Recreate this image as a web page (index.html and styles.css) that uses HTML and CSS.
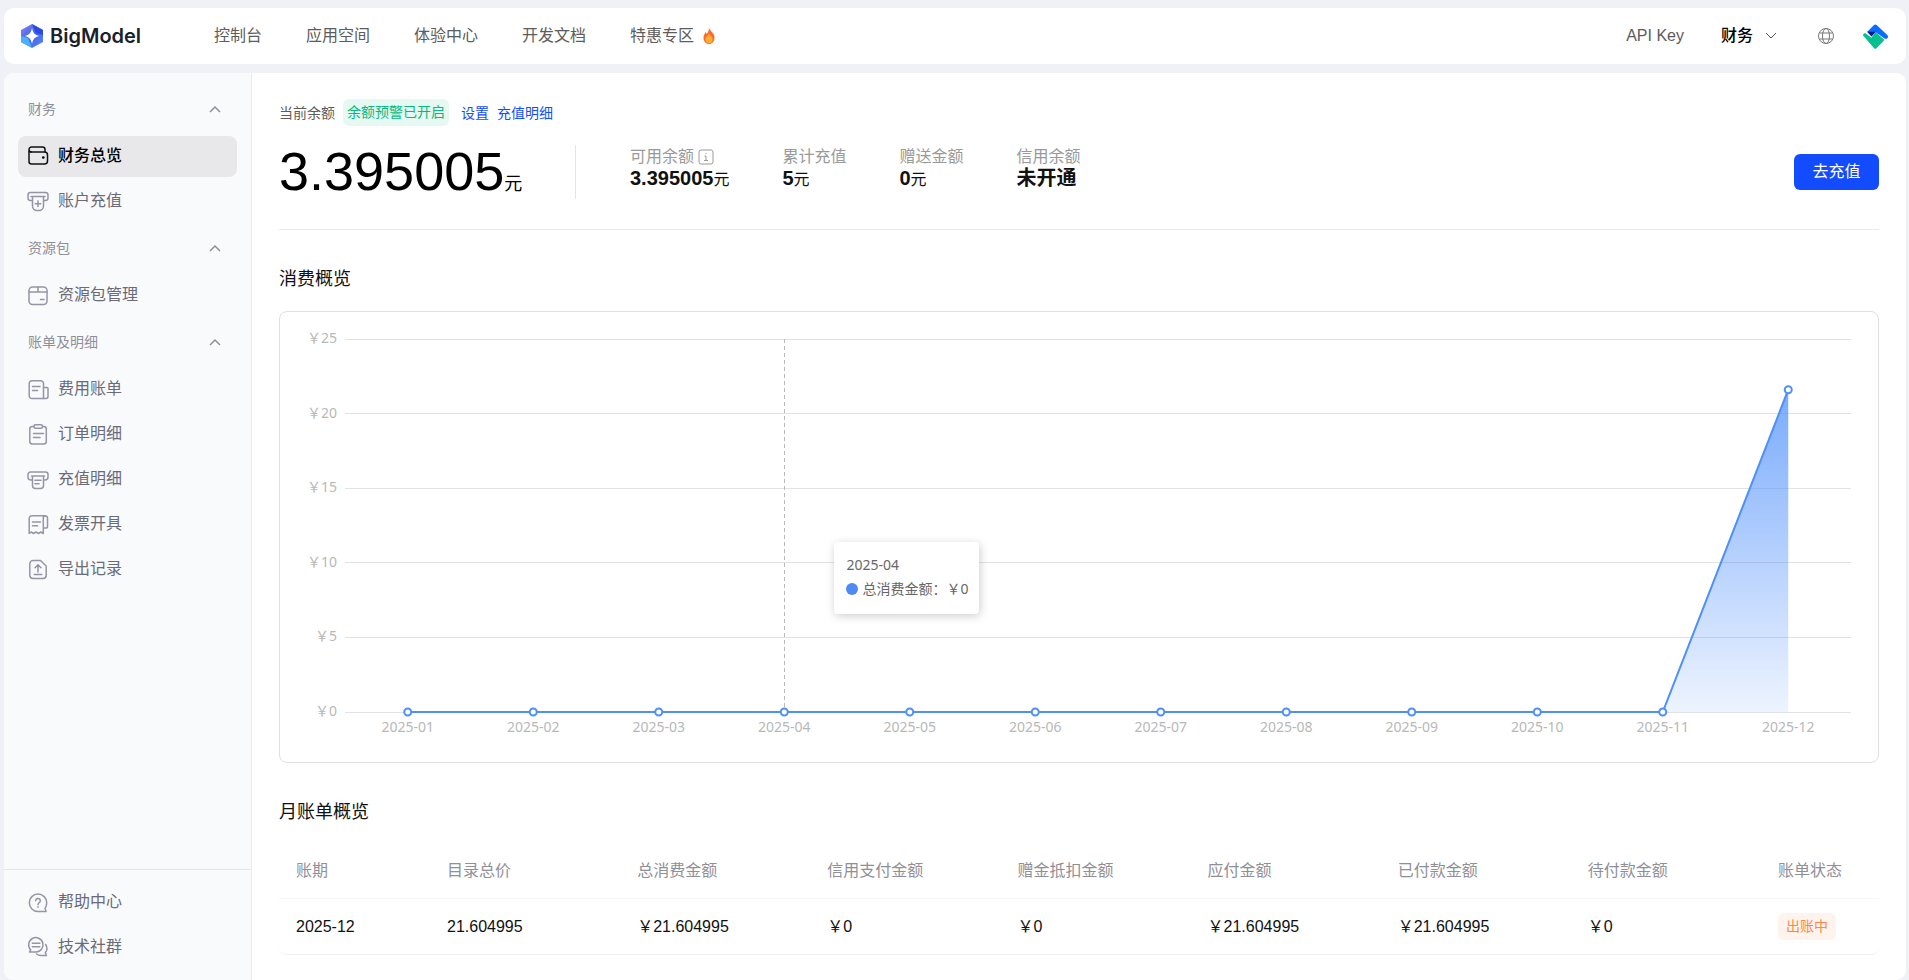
FILE: index.html
```html
<!DOCTYPE html>
<html lang="zh-CN">
<head>
    <meta charset="UTF-8">
    <meta name="viewport" content="width=device-width, initial-scale=1.0">
    <title>财务总览 - BigModel</title>
    <link rel="stylesheet" href="styles.css">
</head>
<body>
    <!-- 顶部导航 -->
    <header class="header">
        <a class="logo" href="#">
            <svg class="logo-icon" viewBox="0 0 22 24">
                <defs>
                    <linearGradient id="logoFill" x1="0" y1="0" x2="1" y2="1">
                        <stop offset="0" stop-color="#8a86f4"/>
                        <stop offset="0.5" stop-color="#3f62ea"/>
                        <stop offset="1" stop-color="#5c8af8"/>
                    </linearGradient>
                </defs>
                <path d="M11 0l11 6v12l-11 6-11-6V6z" fill="url(#logoFill)"/>
                <path d="M0 12l7 2 4 10-11-6z" fill="#4cb0fa"/>
                <path d="M11 0l11 6v5l-7-2z" fill="#2a4be0"/>
                <path d="M11 4c1 5 3 7 7 8-4 1-6 3-7 8-1-5-3-7-7-8 4-1 6-3 7-8z" fill="#fff"/>
            </svg>
            <span>BigModel</span>
        </a>
        <nav class="nav">
            <a href="#">控制台</a>
            <a href="#">应用空间</a>
            <a href="#">体验中心</a>
            <a href="#">开发文档</a>
            <a class="nav-hot" href="#">特惠专区
                <svg class="fire" viewBox="0 0 14 16">
                    <path d="M7 0c1 3 5.500 5 5.500 9.500C12.500 13.500 10 16 7 16s-5.500-2.500-5.500-6.500C1.500 7 3 5.500 3.500 4c.5.500 1 1.200 1.200 2C6 4.500 7 2.500 7 0z" fill="#ff6a2b"/>
                    <path d="M7 5.500c.6 2 3.600 3 3.600 6 0 2.300-1.500 3.700-3.600 3.700s-3.600-1.400-3.600-3.700c0-3 3-4 3.600-6z" fill="#ffad33"/>
                </svg>
            </a>
        </nav>
        <div class="header-right">
            <a class="api-key" href="#">API Key</a>
            <button class="menu-btn" type="button">财务
                <svg class="icon-12" viewBox="0 0 12 12"><path d="M1 3l5 5 5-5" stroke-width="1"/></svg>
            </button>
            <button class="lang-btn" type="button" aria-label="语言">
                <svg class="icon-18" viewBox="0 0 18 18">
                    <circle cx="9" cy="9" r="7.500"/>
                    <ellipse cx="9" cy="9" rx="3.500" ry="7.500"/>
                    <path d="M2.500 6h13M2.500 12h13"/>
                </svg>
            </button>
            <a class="avatar" href="#" aria-label="账号">
                <svg viewBox="0 0 25 25">
                    <path d="M4 8l7-7q1.300-1.200 2.600 0L24.500 11.300q1 1.500 0 2.700-1.500 1.700-3 .6L12.300 8z" fill="#0a6cff"/>
                    <path d="M4 7.700h9L8.500 12.500z" fill="#001c9e"/>
                    <path d="M.5 12q-.9-1 0-2l1.500-1 6.500 4.800L12.300 8l8.200 7q1 .9 0 1.900l-7 7.400q-1.200 1.100-2.400 0z" fill="#06c08f"/>
                </svg>
            </a>
        </div>
    </header>

    <div class="container">
        <!-- 侧边栏 -->
        <aside class="sidebar">
            <div class="side-menu">
                <button class="group-title" type="button">财务
                    <svg class="icon-12" viewBox="0 0 12 12"><path d="M1 9l5-5 5 5"/></svg>
                </button>
                <div class="group">
                    <a class="side-item active" href="#">
                        <svg class="icon-24" viewBox="0 0 24 24">
                            <path d="M3 7V17.500a2.500 2.500 0 0 0 2.500 2.500H18.500a3 3 0 0 0 3-3V11a3 3 0 0 0-3-3H4.500"/>
                            <path d="M19 8V5.500A2.500 2.500 0 0 0 16.500 3H5.500A2.500 2.500 0 0 0 3 5.500Q3 8 5.500 8"/>
                            <circle class="dot" cx="17.300" cy="13.500" r="1.300"/>
                        </svg>
                        <span>财务总览</span>
                    </a>
                    <a class="side-item" href="#">
                        <svg class="icon-24" viewBox="0 0 24 24">
                            <path d="M6 11.500H4A2.500 2.500 0 0 1 2 9V6a2.500 2.500 0 0 1 2.500-2.500h15A2.500 2.500 0 0 1 22 6v3a2.500 2.500 0 0 1-2 2.500h-2"/>
                            <path d="M5 7.500h14M6.500 7.500V17a4.500 4.500 0 0 0 4.500 4.500h2a4.500 4.500 0 0 0 4.500-4.500V7.500M12 12v5.500M9.300 14.700h5.400"/>
                        </svg>
                        <span>账户充值</span>
                    </a>
                </div>
                <button class="group-title" type="button">资源包
                    <svg class="icon-12" viewBox="0 0 12 12"><path d="M1 9l5-5 5 5"/></svg>
                </button>
                <div class="group">
                    <a class="side-item" href="#">
                        <svg class="icon-24" viewBox="0 0 24 24">
                            <rect x="3" y="4" width="18" height="17.500" rx="3.500"/>
                            <path d="M3 9h18M12 4v5M14.500 16.500h3.500"/>
                        </svg>
                        <span>资源包管理</span>
                    </a>
                </div>
                <button class="group-title" type="button">账单及明细
                    <svg class="icon-12" viewBox="0 0 12 12"><path d="M1 9l5-5 5 5"/></svg>
                </button>
                <div class="group">
                    <a class="side-item" href="#">
                        <svg class="icon-24" viewBox="0 0 24 24">
                            <path d="M17.500 21.500H6A2.800 2.800 0 0 1 3.200 18.700V6.500A2.800 2.800 0 0 1 6 3.700h8.700a2.800 2.800 0 0 1 2.800 2.800z"/>
                            <path d="M17.500 10.500h3.500a1 1 0 0 1 1 1v8a2 2 0 0 1-2 2h-2.500M6.500 9.500h7.500M6.500 13.500h5"/>
                        </svg>
                        <span>费用账单</span>
                    </a>
                    <a class="side-item" href="#">
                        <svg class="icon-24" viewBox="0 0 24 24">
                            <rect x="3.800" y="4.500" width="16.500" height="17.500" rx="2.500"/>
                            <rect class="cover" x="8" y="2.700" width="8.500" height="3.600" rx="1.500"/>
                            <path d="M7.500 11.500h10M7.500 15.500h6.500"/>
                        </svg>
                        <span>订单明细</span>
                    </a>
                    <a class="side-item" href="#">
                        <svg class="icon-24" viewBox="0 0 24 24">
                            <path d="M6 13H5a3 3 0 0 1-3-3V7.500A2.500 2.500 0 0 1 4.500 5h15A2.500 2.500 0 0 1 22 7.500V10a3 3 0 0 1-3 3h-1"/>
                            <path d="M5.500 9h13M6.500 9v9.500a3 3 0 0 0 3 3h5a3 3 0 0 0 3-3V9M9 13.300h6M9 16.800h4"/>
                        </svg>
                        <span>充值明细</span>
                    </a>
                    <a class="side-item" href="#">
                        <svg class="icon-24" viewBox="0 0 24 24">
                            <path d="M19 3.700H6A2.800 2.800 0 0 0 3.200 6.500V21.500l2-1.500 2.300 1.500L10 20l2.500 1.500L15 20l2.300 1.500V6a2 2 0 0 1 4.200 0v9a1 1 0 0 1-1 1h-3"/>
                            <path d="M19 3.700h.4M6.500 10h8M6.500 13.800h5"/>
                        </svg>
                        <span>发票开具</span>
                    </a>
                    <a class="side-item" href="#">
                        <svg class="icon-24" viewBox="0 0 24 24">
                            <path d="M14.500 3.500H7A3.200 3.200 0 0 0 3.800 6.700v11.600A3.200 3.200 0 0 0 7 21.500h10a3.200 3.200 0 0 0 3.200-3.200V9z"/>
                            <path d="M12 15V8M9 10.800l3-3 3 3M8.200 17.500h7.600"/>
                        </svg>
                        <span>导出记录</span>
                    </a>
                </div>
            </div>
            <div class="side-footer">
                <a class="side-item" href="#">
                    <svg class="icon-24" viewBox="0 0 24 24">
                        <path d="M12 21.500a8.700 8.700 0 1 1 8.700-8.700c0 2.500-.7 4.300-1.700 5.700l1.200 3z"/>
                        <path d="M9.700 10.700a2.300 2.300 0 1 1 3.500 2c-.8.500-1.200.9-1.200 2M12 16.800v.5"/>
                    </svg>
                    <span>帮助中心</span>
                </a>
                <a class="side-item" href="#">
                    <svg class="icon-24" viewBox="0 0 24 24">
                        <path d="M9.800 17H3.500l1.200-2.200A7.200 7.200 0 1 1 9.800 17zM6.300 8.300h7.500M6.300 11.700h7.500"/>
                        <path d="M19.700 9.500c1.600 2.600 1.500 5.900-.4 8.300l1.200 2.700h-5.500c-2 0-3.400-.6-4.500-1.500"/>
                    </svg>
                    <span>技术社群</span>
                </a>
            </div>
        </aside>

        <main class="main">
            <!-- 余额 -->
            <div class="balance-bar">
                <span>当前余额</span>
                <span class="tag tag-green">余额预警已开启</span>
                <a href="#">设置</a>
                <a href="#">充值明细</a>
            </div>
            <section class="balance">
                <div class="balance-total">3.395005<span class="unit">元</span></div>
                <dl class="stats">
                    <div class="stat">
                        <dt>可用余额
                            <svg class="info" viewBox="0 0 16 16">
                                <rect x="1" y="1" width="14" height="14" rx="2"/>
                                <path d="M6.500 7H8v4.500M6 11.500h4M8 4v1"/>
                            </svg>
                        </dt>
                        <dd>3.395005<span>元</span></dd>
                    </div>
                    <div class="stat">
                        <dt>累计充值</dt>
                        <dd>5<span>元</span></dd>
                    </div>
                    <div class="stat">
                        <dt>赠送金额</dt>
                        <dd>0<span>元</span></dd>
                    </div>
                    <div class="stat">
                        <dt>信用余额</dt>
                        <dd>未开通</dd>
                    </div>
                </dl>
                <button class="recharge-btn" type="button">去充值</button>
            </section>

            <!-- 消费概览图表 -->
            <h2 class="title">消费概览</h2>
            <section class="chart">
                <div class="y-axis">
                    <span>￥25</span>
                    <span>￥20</span>
                    <span>￥15</span>
                    <span>￥10</span>
                    <span>￥5</span>
                    <span>￥0</span>
                </div>
                <div class="chart-body">
                    <div class="plot">
                        <svg class="layer" width="100%" height="100%">
                            <g class="grid-lines">
                                <line x1="0" x2="100%" y1="0" y2="0"/>
                                <line x1="0" x2="100%" y1="20%" y2="20%"/>
                                <line x1="0" x2="100%" y1="40%" y2="40%"/>
                                <line x1="0" x2="100%" y1="60%" y2="60%"/>
                                <line x1="0" x2="100%" y1="80%" y2="80%"/>
                                <line x1="0" x2="100%" y1="100%" y2="100%"/>
                            </g>
                        </svg>
                        <!-- 横向 100 一个月，纵向 10 为 1 元 -->
                        <svg class="layer" viewBox="0 0 1200 250" preserveAspectRatio="none">
                            <defs>
                                <linearGradient id="areaFill" x1="0" y1="0" x2="0" y2="1">
                                    <stop offset="0" stop-color="#4d8ffb" stop-opacity="0.75"/>
                                    <stop offset="1" stop-color="#4d8ffb" stop-opacity="0.1"/>
                                </linearGradient>
                            </defs>
                            <path d="M1050 250L1150 34V250z" fill="url(#areaFill)"/>
                            <path class="series" d="M50 250H1050L1150 34"/>
                        </svg>
                        <svg class="layer" width="100%" height="100%">
                            <line class="pointer" x1="29.2%" x2="29.2%" y1="0" y2="100%"/>
                            <g class="points">
                                <circle cx="4.167%" cy="100%" r="3.500"/>
                                <circle cx="12.500%" cy="100%" r="3.500"/>
                                <circle cx="20.833%" cy="100%" r="3.500"/>
                                <circle cx="29.167%" cy="100%" r="3.500"/>
                                <circle cx="37.500%" cy="100%" r="3.500"/>
                                <circle cx="45.833%" cy="100%" r="3.500"/>
                                <circle cx="54.167%" cy="100%" r="3.500"/>
                                <circle cx="62.500%" cy="100%" r="3.500"/>
                                <circle cx="70.833%" cy="100%" r="3.500"/>
                                <circle cx="79.167%" cy="100%" r="3.500"/>
                                <circle cx="87.500%" cy="100%" r="3.500"/>
                                <circle cx="95.833%" cy="13.600%" r="3.500"/>
                            </g>
                        </svg>
                        <div class="tooltip">
                            <div>2025-04</div>
                            <div class="tooltip-row"><i></i>总消费金额：￥0</div>
                        </div>
                    </div>
                    <div class="x-axis">
                        <span>2025-01</span>
                        <span>2025-02</span>
                        <span>2025-03</span>
                        <span>2025-04</span>
                        <span>2025-05</span>
                        <span>2025-06</span>
                        <span>2025-07</span>
                        <span>2025-08</span>
                        <span>2025-09</span>
                        <span>2025-10</span>
                        <span>2025-11</span>
                        <span>2025-12</span>
                    </div>
                </div>
            </section>

            <!-- 月账单 -->
            <h2 class="title">月账单概览</h2>
            <table class="bill">
                <thead>
                    <tr>
                        <th class="col-date">账期</th>
                        <th>目录总价</th>
                        <th>总消费金额</th>
                        <th>信用支付金额</th>
                        <th>赠金抵扣金额</th>
                        <th>应付金额</th>
                        <th>已付款金额</th>
                        <th>待付款金额</th>
                        <th class="col-status">账单状态</th>
                    </tr>
                </thead>
                <tbody>
                    <tr>
                        <td>2025-12</td>
                        <td>21.604995</td>
                        <td>￥21.604995</td>
                        <td>￥0</td>
                        <td>￥0</td>
                        <td>￥21.604995</td>
                        <td>￥21.604995</td>
                        <td>￥0</td>
                        <td><span class="tag tag-orange">出账中</span></td>
                    </tr>
                </tbody>
            </table>
        </main>
    </div>
</body>
</html>
```

FILE: styles.css
```css
* {
    box-sizing: border-box;
}
body {
    margin: 0;
    padding: 8px 3px 0 4px;
    min-height: 100vh;
    display: flex;
    flex-direction: column;
    gap: 9px;
    background: #f0f1f6;
    color: #111;
    font-family: "Liberation Sans", "Noto Sans CJK SC", sans-serif;
    font-size: 16px;
    line-height: 24px;
}
a {
    color: inherit;
    text-decoration: none;
}
button {
    border: 0;
    padding: 0;
    background: none;
    color: inherit;
    font: inherit;
    cursor: pointer;
}
svg {
    display: block;
    flex: none;
    fill: none;
}

/*图标*/
.icon-12 {
    width: 12px;
    height: 12px;
    stroke: currentColor;
    stroke-width: 1.5;
}
.icon-18 {
    width: 18px;
    height: 18px;
    stroke: #77777f;
}
.icon-24 {
    width: 24px;
    height: 24px;
    stroke: #9595a8;
    stroke-width: 1.5;
    stroke-linecap: round;
    stroke-linejoin: round;
}

/*顶部导航*/
.header {
    height: 56px;
    padding: 0 18px 0 17px;
    display: flex;
    align-items: center;
    background: #fff;
    border-radius: 10px;
}
.logo {
    display: flex;
    align-items: center;
    gap: 7px;
    width: 193px;
    color: #1a1f2b;
    font-family: Inter, sans-serif;
    font-size: 20px;
    font-weight: 600;
}
.logo-icon {
    width: 22px;
    height: 24px;
}
.nav {
    display: flex;
    gap: 44px;
    color: #5c5c5c;
}
.nav-hot {
    display: flex;
    align-items: center;
    gap: 8px;
}
.fire {
    width: 14px;
    height: 16px;
}
.header-right {
    margin-left: auto;
    display: flex;
    align-items: center;
    color: #5c5c5c;
}
.menu-btn {
    display: flex;
    align-items: center;
    gap: 12px;
    margin: 0 40px 0 37px;
    color: #000;
    font-weight: 500;
}
.menu-btn svg {
    color: #555;
}
.avatar {
    width: 25px;
    margin-left: 28px;
}

/*主体*/
.container {
    flex: 1;
    display: flex;
    background: #fff;
    border-radius: 10px;
    overflow: hidden;
}
.sidebar {
    width: 248px;
    flex: none;
    display: flex;
    flex-direction: column;
    justify-content: space-between;
    background: #f9fafc;
    border-right: 1px solid #e9eaee;
}
.side-menu {
    padding: 10px 14px 0;
}
.group-title {
    width: 100%;
    height: 53px;
    padding: 0 16px 2px 10px;
    display: flex;
    align-items: center;
    justify-content: space-between;
    color: #8f8f99;
    font-size: 14px;
}
.group,
.side-footer {
    display: flex;
    flex-direction: column;
    gap: 4px;
}
.side-item {
    height: 41px;
    padding: 0 8px 1px;
    display: flex;
    align-items: center;
    gap: 8px;
    border-radius: 8px;
    color: #6a6a78;
}
.side-item .dot {
    fill: currentColor;
    stroke: none;
}
.side-item .cover {
    fill: #f9fafc;
}
.side-item.active {
    background: #e8e8ea;
    color: #000;
    font-weight: 500;
}
.side-item.active svg {
    stroke: #111;
}
.side-footer {
    padding: 12px 14px;
    border-top: 1px solid #e6e7eb;
}

.main {
    flex: 1;
    min-width: 0;
    padding: 26px 27px 24px;
}

/*余额*/
.balance-bar {
    display: flex;
    align-items: center;
    gap: 8px;
    color: #5c5c5c;
    font-size: 14px;
}
.balance-bar a {
    color: #134cff;
}
.tag {
    display: inline-block;
    line-height: 27px;
    border-radius: 6px;
    font-size: 14px;
}
.tag-green {
    margin-right: 4px;
    padding: 0 4px;
    background: #e5f8f2;
    color: #0cb77c;
}
.tag-orange {
    padding: 0 8px;
    background: #fff4ed;
    color: #ff8745;
}
.balance {
    display: flex;
    align-items: center;
    padding: 19px 0 30px;
    border-bottom: 1px solid #ebebeb;
}
.balance-total {
    width: 297px;
    height: 54px;
    border-right: 1px solid #e4e4e4;
    color: #000;
    font-size: 54px;
    line-height: 52px;
    white-space: nowrap;
}
.balance-total .unit {
    font-size: 18px;
}
.stats {
    flex: 1;
    height: 54px;
    margin: 0 0 0 54px;
    display: flex;
    gap: 53px;
}
.stat dt {
    display: flex;
    align-items: center;
    gap: 4px;
    color: #999;
}
.stat dd {
    margin: 0;
    font-size: 20px;
    font-weight: bold;
    line-height: 18px;
}
.stat dd span {
    font-size: 16px;
    font-weight: normal;
}
.info {
    width: 16px;
    height: 16px;
    stroke: #999;
}
.recharge-btn {
    width: 85px;
    height: 36px;
    border-radius: 6px;
    background: #134cff;
    color: #fff;
}

.title {
    margin: 35px 0 18px;
    font-size: 18px;
    font-weight: normal;
    line-height: 28px;
}

/*图表*/
.chart {
    display: grid;
    grid-template-columns: 57px 1fr;
    column-gap: 8px;
    padding: 16px 27px 25px 0;
    border: 1px solid #dfe0e2;
    border-radius: 8px;
    color: #b8b8b8;
    font-family: "Noto Sans", "Noto Sans CJK SC", sans-serif;
    font-size: 14px;
    line-height: 20px;
}
.y-axis {
    height: 393px;
    display: flex;
    flex-direction: column;
    justify-content: space-between;
    text-align: right;
}
.chart-body {
    padding-top: 11px;
}
.plot {
    position: relative;
    height: 373px;
}
/*多个图层叠在绘图区上*/
.layer {
    position: absolute;
    top: 0;
    left: 0;
    width: 100%;
    height: 100%;
    overflow: visible;
}
.grid-lines {
    stroke: #e0e2e6;
    shape-rendering: crispEdges;
}
.series {
    stroke: #4d8ffb;
    stroke-width: 2;
    vector-effect: non-scaling-stroke;
}
.pointer {
    stroke: #bbb;
    stroke-dasharray: 4 3;
    shape-rendering: crispEdges;
}
.points {
    fill: #fff;
    stroke: #4d8ffb;
    stroke-width: 2;
}
.tooltip {
    position: absolute;
    top: 203px;
    left: 32.5%;
    padding: 11px 11px 13px 12px;
    border-radius: 4px;
    background: #fff;
    box-shadow: 1px 2px 10px rgba(0, 0, 0, 0.2);
    color: #666;
    line-height: 24px;
    white-space: nowrap;
}
.tooltip-row {
    display: flex;
    align-items: center;
    gap: 4px;
}
.tooltip-row i {
    width: 12px;
    height: 12px;
    border-radius: 50%;
    background: #4d8af5;
}
.x-axis {
    margin-top: 5px;
    display: grid;
    grid-template-columns: repeat(12, 1fr);
    text-align: center;
}

/*月账单表格*/
.bill {
    width: 100%;
    table-layout: fixed;
    border-collapse: separate;
    border-spacing: 0;
    text-align: left;
}
.bill th,
.bill td {
    height: 56px;
    padding: 0 0 0 17px;
}
.bill th {
    height: 55px;
    border-bottom: 1px solid #f6f6f8;
    color: #8f8f99;
    font-weight: normal;
}
.bill td {
    border-bottom: 1px solid #f0f0f2;
}
.bill td:first-child {
    border-bottom-left-radius: 8px;
}
.bill td:last-child {
    border-bottom-right-radius: 8px;
}
.col-date {
    width: 151px;
}
.col-status {
    width: 118px;
}
```
